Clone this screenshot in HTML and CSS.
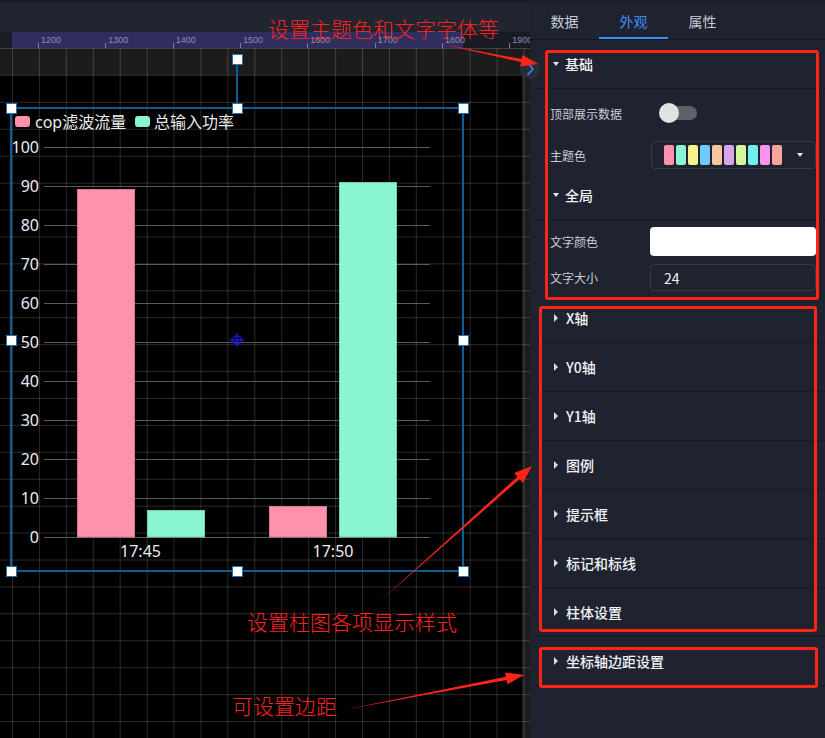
FILE: index.html
```html
<!DOCTYPE html>
<html lang="zh-CN">
<head>
<meta charset="utf-8">
<title>柱图外观设置</title>
<link rel="stylesheet" href="styles.css">
</head>
<body>
<main class="editor">
  <div class="topbar"></div>
  <div class="ruler-row">
    <div class="ruler-corner"></div>
    <div class="ruler">
      <span class="tick">1200</span><span class="tick">1300</span><span class="tick">1400</span><span class="tick">1500</span><span class="tick">1600</span><span class="tick">1700</span><span class="tick">1800</span><span class="tick">1900</span>
    </div>
  </div>
  <div class="workspace">
    <div class="canvas"></div>
    <div class="grid"></div>
    <div class="chart">
      <svg class="chart-svg" width="454" height="465" viewBox="10 107 454 465">
        <g class="legend">
          <rect x="15" y="116" width="15" height="11" rx="3" fill="#ff91ad"/>
          <text x="35" y="121.5">cop滤波流量</text>
          <rect x="135" y="116" width="15" height="11" rx="3" fill="#8af6d1"/>
          <text x="154" y="121.5">总输入功率</text>
        </g>
        <g class="gridlines">
          <line x1="44" x2="430" y1="147.5" y2="147.5"/>
          <line x1="44" x2="430" y1="186.5" y2="186.5"/>
          <line x1="44" x2="430" y1="225.5" y2="225.5"/>
          <line x1="44" x2="430" y1="264.5" y2="264.5"/>
          <line x1="44" x2="430" y1="303.5" y2="303.5"/>
          <line x1="44" x2="430" y1="342.5" y2="342.5"/>
          <line x1="44" x2="430" y1="381.5" y2="381.5"/>
          <line x1="44" x2="430" y1="420.5" y2="420.5"/>
          <line x1="44" x2="430" y1="459.5" y2="459.5"/>
          <line x1="44" x2="430" y1="498.5" y2="498.5"/>
          <line x1="44" x2="430" y1="537.5" y2="537.5"/>
        </g>
        <g class="ylabels">
          <text x="39" y="147">100</text>
          <text x="39" y="186">90</text>
          <text x="39" y="225">80</text>
          <text x="39" y="264">70</text>
          <text x="39" y="303">60</text>
          <text x="39" y="342">50</text>
          <text x="39" y="381">40</text>
          <text x="39" y="420">30</text>
          <text x="39" y="459">20</text>
          <text x="39" y="498">10</text>
          <text x="39" y="537">0</text>
        </g>
        <g class="bars">
          <rect class="bar-a" x="77.5" y="189.5" width="57" height="347.5"/>
          <rect class="bar-b" x="147.5" y="510.5" width="57" height="26.5"/>
          <rect class="bar-a" x="269.5" y="506.5" width="57" height="30.5"/>
          <rect class="bar-b" x="339.5" y="182.5" width="57" height="354.5"/>
        </g>
        <g class="xlabels">
          <text x="140.5" y="551">17:45</text>
          <text x="333" y="551">17:50</text>
        </g>
        <g class="crosshair">
          <circle cx="237" cy="340" r="4"/>
          <line x1="230" x2="244" y1="340" y2="340"/>
          <line x1="237" x2="237" y1="333" y2="347"/>
        </g>
      </svg>
      <div class="selection"></div>
      <div class="rotate-line"></div>
      <span class="handle h-rot"></span>
      <span class="handle h-tl"></span>
      <span class="handle h-tc"></span>
      <span class="handle h-tr"></span>
      <span class="handle h-ml"></span>
      <span class="handle h-mr"></span>
      <span class="handle h-bl"></span>
      <span class="handle h-bc"></span>
      <span class="handle h-br"></span>
    </div>
  </div>
</main>

<aside class="panel">
  <nav class="tabs">
    <span class="tab">数据</span>
    <span class="tab active">外观</span>
    <span class="tab">属性</span>
  </nav>
  <button class="collapse-btn" type="button" aria-label="收起">
    <svg width="20" height="20" viewBox="0 0 20 20"><path d="M8 4.5 L13 10 L8 15.5" fill="none" stroke="#3f86ff" stroke-width="1.6" stroke-linecap="round" stroke-linejoin="round"/></svg>
  </button>

  <section class="group open">
    <div class="group-head"><i class="caret down"></i><span>基础</span></div>
    <div class="group-body">
      <div class="row row-switch">
        <span class="label">顶部展示数据</span>
        <span class="switch"></span>
      </div>
      <div class="row row-select">
        <span class="label">主题色</span>
        <div class="select">
          <span class="sw" style="background:#ff91ad"></span>
          <span class="sw" style="background:#8af6d1"></span>
          <span class="sw" style="background:#f6f28c"></span>
          <span class="sw" style="background:#6fcbff"></span>
          <span class="sw" style="background:#f8c69c"></span>
          <span class="sw" style="background:#d6a6e8"></span>
          <span class="sw" style="background:#d5f79c"></span>
          <span class="sw" style="background:#72f0f0"></span>
          <span class="sw" style="background:#f993ef"></span>
          <span class="sw" style="background:#f6a59b"></span>
          <i class="caret down select-caret"></i>
        </div>
      </div>
      <div class="group-head sub"><i class="caret down"></i><span>全局</span></div>
      <div class="row row-color">
        <span class="label">文字颜色</span>
        <div class="color-input"></div>
      </div>
      <div class="row row-size">
        <span class="label">文字大小</span>
        <div class="num-input">24</div>
      </div>
    </div>
  </section>

  <section class="group"><div class="group-head"><i class="caret right"></i><span>X轴</span></div></section>
  <section class="group"><div class="group-head"><i class="caret right"></i><span>Y0轴</span></div></section>
  <section class="group"><div class="group-head"><i class="caret right"></i><span>Y1轴</span></div></section>
  <section class="group"><div class="group-head"><i class="caret right"></i><span>图例</span></div></section>
  <section class="group"><div class="group-head"><i class="caret right"></i><span>提示框</span></div></section>
  <section class="group"><div class="group-head"><i class="caret right"></i><span>标记和标线</span></div></section>
  <section class="group"><div class="group-head"><i class="caret right"></i><span>柱体设置</span></div></section>
  <section class="group"><div class="group-head"><i class="caret right"></i><span>坐标轴边距设置</span></div></section>
</aside>

<div class="annot">
  <div class="box box-1"></div>
  <div class="box box-2"></div>
  <div class="box box-3"></div>
  <svg class="arrows" width="825" height="738" viewBox="0 0 825 738">
    <polygon points="441,44 521.6,59.1 522.5,54.7 538,64 520.1,66.5 521,62.1"/>
    <polygon points="378,603 517.4,476.8 514.2,473.1 532,466 522.8,482.9 519.6,479.2"/>
    <polygon points="343,710 506,676.8 505.2,672.5 524,675 507.4,684.3 506.6,680"/>
  </svg>
  <p class="note note-1">设置主题色和文字字体等</p>
  <p class="note note-2">设置柱图各项显示样式</p>
  <p class="note note-3">可设置边距</p>
</div>
</body>
</html>
```

FILE: styles.css
```css
* { box-sizing: border-box; margin: 0; padding: 0; }
html, body { width: 825px; height: 738px; overflow: hidden; }
body {
  position: relative;
  display: flex;
  background: #1f2330;
  font-family: "Noto Sans CJK SC", "Noto Sans", sans-serif;
}

/* ---------- editor ---------- */
.editor {
  width: 530px;
  height: 738px;
  flex: none;
  display: flex;
  flex-direction: column;
  background: #1c1c1c;
}
.topbar {
  height: 32px;
  flex: none;
  background: #21252f;
  border-top: 3px solid #191c24;
}
.ruler-row { height: 16px; flex: none; display: flex; }
.ruler-corner { width: 12px; flex: none; background: #1a1d26; }
.ruler {
  flex: 1;
  display: flex;
  padding-left: 27px;
  overflow: hidden;
  background: linear-gradient(to right, #2f2e5f 0 451px, #181b24 451px);
}
.tick {
  width: 67.33px;
  flex: none;
  position: relative;
  padding-left: 2px;
  font: 9px/16px "Liberation Sans", sans-serif;
  color: #8f8eb0;
}
.tick::before {
  content: "";
  position: absolute;
  left: -1px;
  bottom: 0;
  width: 1px;
  height: 5px;
  background: #7d7ca2;
}

.workspace { flex: 1; position: relative; overflow: hidden; }
.canvas {
  position: absolute;
  left: 0; top: 27px;
  width: 522px; bottom: 0;
  background: #000;
}
.grid {
  position: absolute;
  inset: 0;
  background-image:
    linear-gradient(to right, rgba(255,255,255,0.16) 1px, transparent 1px),
    linear-gradient(to bottom, rgba(255,255,255,0.16) 1px, transparent 1px);
  background-size: 26.93px 26.93px;
  background-position: 12px 0;
}

.chart {
  position: absolute;
  left: 10px; top: 59px;
  width: 454px; height: 465px;
}
.chart-svg { position: absolute; left: 0; top: 0; overflow: visible; }
.chart-svg text {
  font-family: "Noto Sans", "Noto Sans CJK SC", sans-serif;
  font-size: 16px;
  fill: #ececec;
  dominant-baseline: central;
}
.ylabels text { text-anchor: end; }
.xlabels text { text-anchor: middle; }
.gridlines line { stroke: #5a5a5a; stroke-width: 1; }
.bar-a { fill: #ff91ad; stroke: #d97a93; stroke-width: 1; }
.bar-b { fill: #8af6d1; stroke: #72cfae; stroke-width: 1; }
.crosshair circle, .crosshair line { fill: none; stroke: #1616c8; stroke-width: 1.6; }

.selection {
  position: absolute;
  inset: 0;
  border: 2px solid #0c5d93;
}
.rotate-line {
  position: absolute;
  left: 226px; top: -48px;
  width: 2px; height: 48px;
  background: #0c5d93;
}
.handle {
  position: absolute;
  width: 11px; height: 11px;
  background: #fff;
  border: 1px solid #1c73b8;
}
.h-rot { left: 221.5px; top: -53.5px; }
.h-tl  { left: -4.5px;  top: -4.5px; }
.h-tc  { left: 221.5px; top: -4.5px; }
.h-tr  { left: 447.5px; top: -4.5px; }
.h-ml  { left: -4.5px;  top: 227.5px; }
.h-mr  { left: 447.5px; top: 227.5px; }
.h-bl  { left: -4.5px;  top: 458.5px; }
.h-bc  { left: 221.5px; top: 458.5px; }
.h-br  { left: 447.5px; top: 458.5px; }

/* ---------- panel ---------- */
.panel {
  width: 295px;
  flex: none;
  position: relative;
  background: #1f2330;
  color: #c9ccd3;
}
.tabs {
  display: flex;
  height: 40px;
  border-top: 3px solid #1b1e27;
  border-bottom: 1px solid #151821;
}
.tab {
  width: 69px;
  display: flex;
  align-items: center;
  justify-content: center;
  font-size: 14px;
  color: #c8cbd2;
  position: relative;
}
.tab.active { color: #3f8cff; }
.tab.active::after {
  content: "";
  position: absolute;
  left: 0; right: 0; bottom: 0;
  height: 2px;
  background: #3f8cff;
}
.collapse-btn {
  position: absolute;
  left: -10px; top: 59px;
  width: 20px; height: 20px;
  border: none;
  border-radius: 50%;
  background: #292d38;
  display: flex;
  align-items: center;
  justify-content: center;
}
.collapse-btn svg { display: block; }

.group-head {
  height: 49px;
  margin-left: 5px;
  padding-left: 18px;
  border-bottom: 1px solid #161922;
  display: flex;
  align-items: center;
  gap: 6px;
  font-size: 14px;
  font-weight: 500;
  color: #f1f2f5;
}
.group-head.sub { margin-top: 2px; }

.caret { display: block; width: 0; height: 0; flex: none; }
.caret.down {
  border-left: 3.5px solid transparent;
  border-right: 3.5px solid transparent;
  border-top: 4px solid #e4e6ea;
}
.caret.right {
  margin-left: 1px;
  margin-right: 2px;
  border-top: 4px solid transparent;
  border-bottom: 4px solid transparent;
  border-left: 4px solid #dadde2;
}

.group-body { padding: 12px 0 3px; }
.row {
  display: flex;
  align-items: center;
  padding: 0 9px 0 20px;
}
.label {
  width: 100px;
  flex: none;
  font-size: 12px;
  color: #c9ccd3;
}
.row-switch { height: 24px; }
.row-select { height: 28px; margin-top: 16px; }
.row-color { height: 29px; margin-top: 7px; }
.row-size { height: 27px; margin-top: 8px; }

.switch {
  position: relative;
  width: 38px; height: 20px;
  margin-left: 9px;
}
.switch::before {
  content: "";
  position: absolute;
  left: 1px; top: 3px;
  width: 37px; height: 14px;
  border-radius: 7px;
  background: #5e616b;
}
.switch::after {
  content: "";
  position: absolute;
  left: 0; top: 0;
  width: 20px; height: 20px;
  border-radius: 50%;
  background: #e2e2e2;
}

.select {
  flex: 1;
  height: 28px;
  margin-left: 1px;
  border: 1px solid #363a46;
  border-radius: 4px;
  display: flex;
  align-items: center;
  gap: 2px;
  padding: 0 12px;
}
.sw { width: 10px; height: 20px; border-radius: 2px; flex: none; }
.select-caret {
  margin-left: auto;
  border-left-width: 4px;
  border-right-width: 4px;
  border-top: 5px solid #f0f0f0;
}
.color-input {
  flex: 1;
  height: 29px;
  border-radius: 4px;
  background: #fff;
}
.num-input {
  flex: 1;
  height: 27px;
  border: 1px solid #363a46;
  border-radius: 4px;
  padding-left: 13px;
  display: flex;
  align-items: center;
  font-size: 14px;
  color: #f2f3f5;
}

/* ---------- annotations ---------- */
.annot {
  position: absolute;
  inset: 0;
  pointer-events: none;
  z-index: 10;
}
.box {
  position: absolute;
  border: 3px solid #ff2418;
  border-radius: 3px;
}
.box-1 { left: 545px; top: 50px; width: 274px; height: 250px; }
.box-2 { left: 539px; top: 306px; width: 278px; height: 326px; }
.box-3 { left: 539px; top: 647px; width: 279px; height: 41px; }
.arrows { position: absolute; left: 0; top: 0; }
.arrows polygon { fill: #ff2418; }
.note {
  position: absolute;
  font-size: 21px;
  line-height: 21px;
  font-weight: 300;
  color: #ff2020;
  white-space: nowrap;
}
.note-1 { left: 268px; top: 18px; }
.note-2 { left: 247px; top: 611px; }
.note-3 { left: 232px; top: 695px; }
```
